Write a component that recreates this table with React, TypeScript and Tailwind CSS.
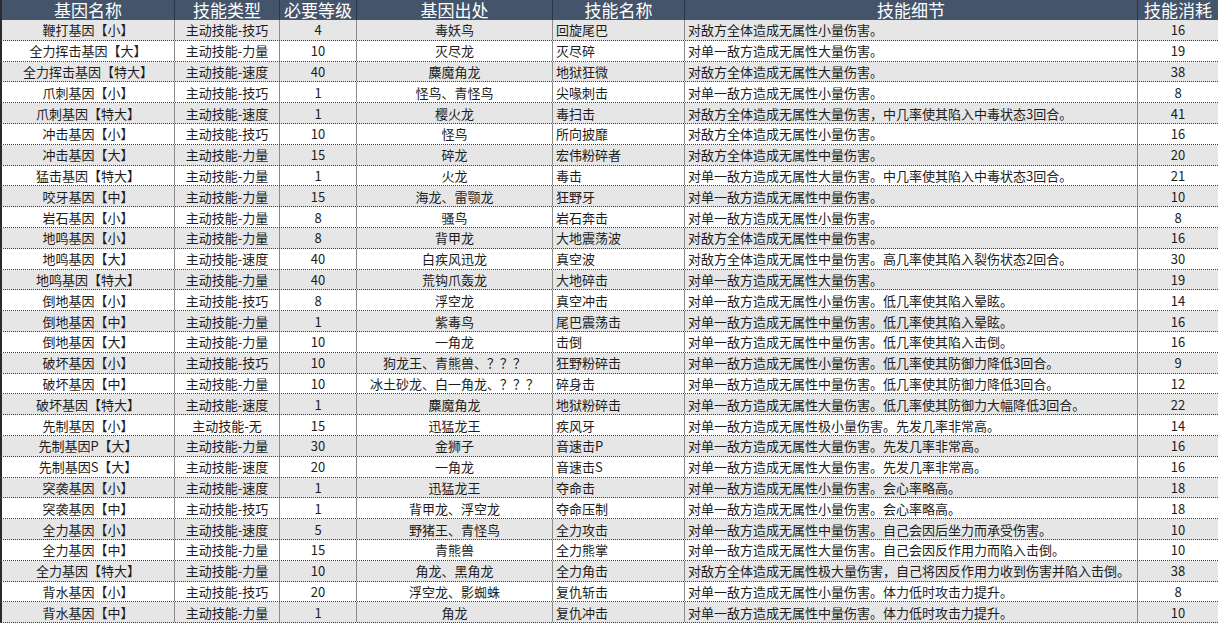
import React from 'react';

type Gene = [string, string, string, string, string, string, string];

const headers = ['基因名称', '技能类型', '必要等级', '基因出处', '技能名称', '技能细节', '技能消耗'];

const genes: Gene[] = [
  ['鞭打基因【小】', '主动技能-技巧', '4', '毒妖鸟', '回旋尾巴', '对敌方全体造成无属性小量伤害。', '16'],
  ['全力挥击基因【大】', '主动技能-力量', '10', '灭尽龙', '灭尽碎', '对单一敌方造成无属性大量伤害。', '19'],
  ['全力挥击基因【特大】', '主动技能-速度', '40', '麋魔角龙', '地狱狂微', '对敌方全体造成无属性大量伤害。', '38'],
  ['爪刺基因【小】', '主动技能-技巧', '1', '怪鸟、青怪鸟', '尖喙刺击', '对单一敌方造成无属性小量伤害。', '8'],
  ['爪刺基因【特大】', '主动技能-速度', '1', '樱火龙', '毒扫击', '对敌方全体造成无属性大量伤害，中几率使其陷入中毒状态3回合。', '41'],
  ['冲击基因【小】', '主动技能-技巧', '10', '怪鸟', '所向披靡', '对敌方全体造成无属性小量伤害。', '16'],
  ['冲击基因【大】', '主动技能-力量', '15', '碎龙', '宏伟粉碎者', '对敌方全体造成无属性中量伤害。', '20'],
  ['猛击基因【特大】', '主动技能-力量', '1', '火龙', '毒击', '对单一敌方造成无属性大量伤害。中几率使其陷入中毒状态3回合。', '21'],
  ['咬牙基因【中】', '主动技能-力量', '15', '海龙、雷颚龙', '狂野牙', '对单一敌方造成无属性中量伤害。', '10'],
  ['岩石基因【小】', '主动技能-力量', '8', '骚鸟', '岩石奔击', '对单一敌方造成无属性小量伤害。', '8'],
  ['地鸣基因【小】', '主动技能-力量', '8', '背甲龙', '大地震荡波', '对敌方全体造成无属性中量伤害。', '16'],
  ['地鸣基因【大】', '主动技能-速度', '40', '白疾风迅龙', '真空波', '对敌方全体造成无属性中量伤害。高几率使其陷入裂伤状态2回合。', '30'],
  ['地鸣基因【特大】', '主动技能-力量', '40', '荒钩爪轰龙', '大地碎击', '对单一敌方造成无属性大量伤害。', '19'],
  ['倒地基因【小】', '主动技能-技巧', '8', '浮空龙', '真空冲击', '对单一敌方造成无属性小量伤害。低几率使其陷入晕眩。', '14'],
  ['倒地基因【中】', '主动技能-力量', '1', '紫毒鸟', '尾巴震荡击', '对单一敌方造成无属性中量伤害。低几率使其陷入晕眩。', '16'],
  ['倒地基因【大】', '主动技能-力量', '10', '一角龙', '击倒', '对单一敌方造成无属性中量伤害。低几率使其陷入击倒。', '16'],
  ['破坏基因【小】', '主动技能-技巧', '10', '狗龙王、青熊兽、？？？', '狂野粉碎击', '对单一敌方造成无属性小量伤害。低几率使其防御力降低3回合。', '9'],
  ['破坏基因【中】', '主动技能-力量', '10', '冰土砂龙、白一角龙、？？？', '碎身击', '对单一敌方造成无属性中量伤害。低几率使其防御力降低3回合。', '12'],
  ['破坏基因【特大】', '主动技能-速度', '1', '麋魔角龙', '地狱粉碎击', '对单一敌方造成无属性大量伤害。低几率使其防御力大幅降低3回合。', '22'],
  ['先制基因【小】', '主动技能-无', '15', '迅猛龙王', '疾风牙', '对单一敌方造成无属性极小量伤害。先发几率非常高。', '14'],
  ['先制基因P【大】', '主动技能-力量', '30', '金狮子', '音速击P', '对单一敌方造成无属性大量伤害。先发几率非常高。', '16'],
  ['先制基因S【大】', '主动技能-速度', '20', '一角龙', '音速击S', '对单一敌方造成无属性大量伤害。先发几率非常高。', '16'],
  ['突袭基因【小】', '主动技能-速度', '1', '迅猛龙王', '夺命击', '对单一敌方造成无属性小量伤害。会心率略高。', '18'],
  ['突袭基因【中】', '主动技能-技巧', '1', '背甲龙、浮空龙', '夺命压制', '对单一敌方造成无属性小量伤害。会心率略高。', '18'],
  ['全力基因【小】', '主动技能-速度', '5', '野猪王、青怪鸟', '全力攻击', '对单一敌方造成无属性中量伤害。自己会因后坐力而承受伤害。', '10'],
  ['全力基因【中】', '主动技能-力量', '15', '青熊兽', '全力熊掌', '对单一敌方造成无属性大量伤害。自己会因反作用力而陷入击倒。', '10'],
  ['全力基因【特大】', '主动技能-力量', '10', '角龙、黑角龙', '全力角击', '对敌方全体造成无属性极大量伤害，自己将因反作用力收到伤害并陷入击倒。', '38'],
  ['背水基因【小】', '主动技能-技巧', '20', '浮空龙、影蜘蛛', '复仇斩击', '对单一敌方造成无属性小量伤害。体力低时攻击力提升。', '8'],
  ['背水基因【中】', '主动技能-力量', '1', '角龙', '复仇冲击', '对单一敌方造成无属性中量伤害。体力低时攻击力提升。', '10'],
];

const GRID = 'grid grid-cols-[175px_105px_77px_196px_132px_453px_80px]';

// columns 5 and 6 are left aligned, the rest centred
const cellAlign = (i: number) => (i === 4 || i === 5 ? 'justify-start pl-[3px]' : 'justify-center');

export default function App() {
  return (
    <div
      className="w-[1218px] h-[625px] overflow-hidden bg-white text-[#1c1c1c]"
      style={{ fontFamily: '"Noto Sans CJK SC", "Noto Sans", sans-serif' }}
    >
      {/* Header */}
      <div className={`${GRID} h-[20px] bg-[#44546a] text-white text-[17px] leading-[20px]`}>
        {headers.map((h, i) => (
          <div
            key={h}
            className={`flex items-center justify-center whitespace-nowrap ${
              i < 6 ? 'border-r border-[#2c3746]' : ''
            } ${i === 0 ? 'border-l-2 border-l-[#2a2a2a]' : ''}`}
          >
            <span className="leading-[20px]">{h}</span>
          </div>
        ))}
      </div>

      {/* Rows */}
      {genes.map((row, r) => (
        <div
          key={r}
          className={`${GRID} h-[20.8px] border-b border-dotted border-[#3a3a3a] text-[13px] leading-none ${
            r % 2 === 0 ? 'bg-[#e6e6e6]' : 'bg-white'
          }`}
        >
          {row.map((cell, i) => (
            <div
              key={i}
              className={`flex items-center overflow-hidden whitespace-nowrap ${cellAlign(i)} ${
                i < 6 ? 'border-r border-[#8a8a8a]' : ''
              } ${i === 0 ? 'border-l-2 border-l-[#2a2a2a]' : ''}`}
            >
              {cell}
            </div>
          ))}
        </div>
      ))}
    </div>
  );
}
